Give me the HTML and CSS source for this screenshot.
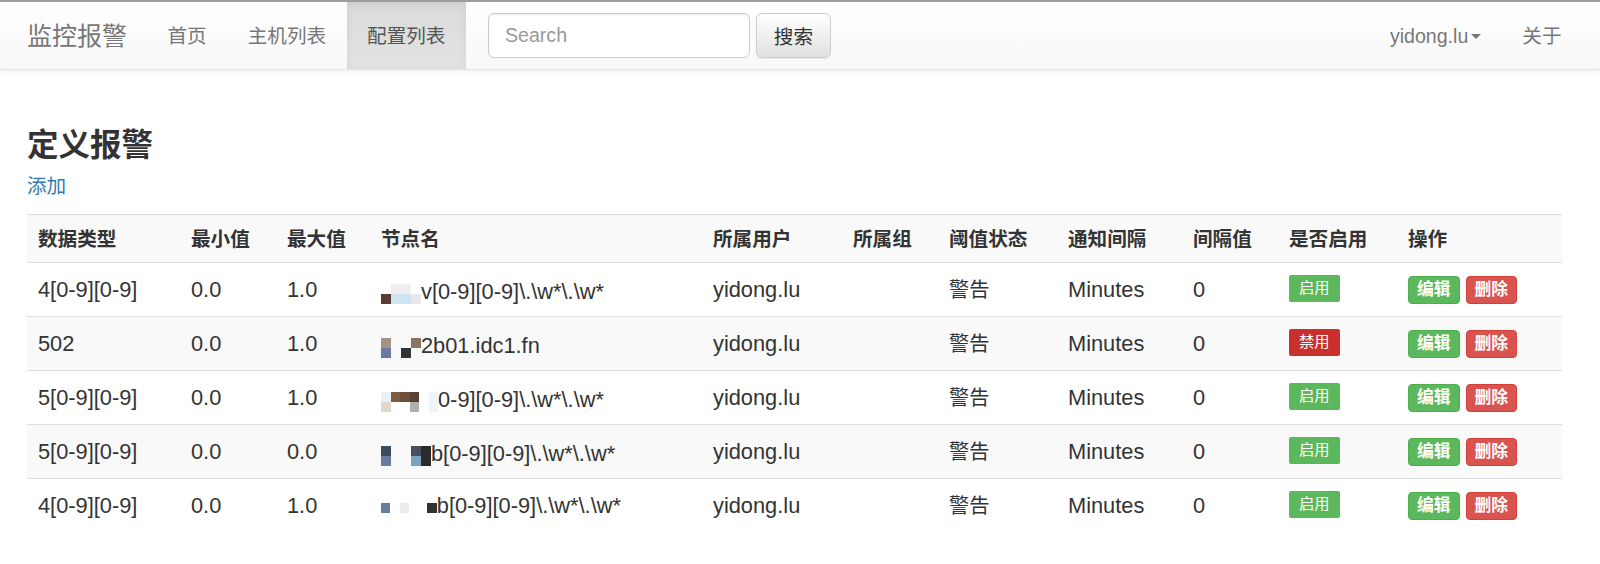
FILE: index.html
```html
<!DOCTYPE html>
<html lang="zh-CN">
<head>
<meta charset="utf-8">
<title>监控报警</title>
<link rel="stylesheet" href="styles.css">
</head>
<body>
<nav class="navbar">
  <div class="nav-inner">
    <a class="brand" href="#">监控报警</a>
    <ul class="nav">
      <li><a href="#">首页</a></li>
      <li><a href="#">主机列表</a></li>
      <li class="active"><a href="#">配置列表</a></li>
    </ul>
    <form class="search">
      <input class="search-input" type="text" placeholder="Search">
      <button class="search-btn" type="button">搜索</button>
    </form>
    <ul class="nav nav-right">
      <li><a href="#">yidong.lu<span class="caret"></span></a></li>
      <li><a href="#">关于</a></li>
    </ul>
  </div>
</nav>

<main class="container">
  <h3 class="title">定义报警</h3>
  <a class="add-link" href="#">添加</a>

  <table class="table">
    <colgroup>
      <col class="c1"><col class="c2"><col class="c3"><col class="c4"><col class="c5"><col class="c6"><col class="c7"><col class="c8"><col class="c9"><col class="c10"><col class="c11">
    </colgroup>
    <tbody>
      <tr class="head">
        <th>数据类型</th><th>最小值</th><th>最大值</th><th>节点名</th><th>所属用户</th><th>所属组</th><th>阈值状态</th><th>通知间隔</th><th>间隔值</th><th>是否启用</th><th>操作</th>
      </tr>
      <tr>
        <td>4[0-9][0-9]</td><td>0.0</td><td>1.0</td>
        <td><span class="node"><span class="mosaic m1"><i class="t"></i><i class="a"></i><i class="a"></i><i class="t"></i><i class="b"></i><i class="c"></i><i class="c"></i><i class="d"></i></span>v[0-9][0-9]\.\w*\.\w*</span></td>
        <td>yidong.lu</td><td></td><td><span class="zh">警告</span></td><td>Minutes</td><td>0</td>
        <td><span class="label on">启用</span></td>
        <td><span class="btn edit">编辑</span><span class="btn del">删除</span></td>
      </tr>
      <tr>
        <td>502</td><td>0.0</td><td>1.0</td>
        <td><span class="node"><span class="mosaic m2"><i class="a"></i><i class="t"></i><i class="t"></i><i class="e"></i><i class="b"></i><i class="t"></i><i class="d"></i><i class="t"></i></span>2b01.idc1.fn</span></td>
        <td>yidong.lu</td><td class="redact"></td><td><span class="zh">警告</span></td><td>Minutes</td><td>0</td>
        <td><span class="label off">禁用</span></td>
        <td><span class="btn edit">编辑</span><span class="btn del">删除</span></td>
      </tr>
      <tr>
        <td>5[0-9][0-9]</td><td>0.0</td><td>1.0</td>
        <td><span class="node"><span class="mosaic m3"><i class="e"></i><i class="a"></i><i class="b"></i><i class="c"></i><i class="t"></i><i class="f"></i><i class="d"></i><i class="t"></i><i class="t"></i><i class="g"></i><i class="t"></i><i class="f"></i></span>0-9][0-9]\.\w*\.\w*</span></td>
        <td>yidong.lu</td><td></td><td><span class="zh">警告</span></td><td>Minutes</td><td>0</td>
        <td><span class="label on">启用</span></td>
        <td><span class="btn edit">编辑</span><span class="btn del">删除</span></td>
      </tr>
      <tr>
        <td>5[0-9][0-9]</td><td>0.0</td><td>0.0</td>
        <td><span class="node"><span class="mosaic m4"><i class="a"></i><i class="t"></i><i class="t"></i><i class="h"></i><i class="d"></i><i class="b"></i><i class="t"></i><i class="t"></i><i class="e"></i><i class="d"></i></span>b[0-9][0-9]\.\w*\.\w*</span></td>
        <td>yidong.lu</td><td class="redact"></td><td><span class="zh">警告</span></td><td>Minutes</td><td>0</td>
        <td><span class="label on">启用</span></td>
        <td><span class="btn edit">编辑</span><span class="btn del">删除</span></td>
      </tr>
      <tr>
        <td>4[0-9][0-9]</td><td>0.0</td><td>1.0</td>
        <td><span class="node"><span class="mosaic m5"><i class="a"></i><i class="t"></i><i class="b"></i><i class="t"></i><i class="t"></i><i class="c"></i></span>b[0-9][0-9]\.\w*\.\w*</span></td>
        <td>yidong.lu</td><td></td><td><span class="zh">警告</span></td><td>Minutes</td><td>0</td>
        <td><span class="label on">启用</span></td>
        <td><span class="btn edit">编辑</span><span class="btn del">删除</span></td>
      </tr>
    </tbody>
  </table>
</main>
</body>
</html>
```
FILE: styles.css
```css
* { box-sizing: border-box; }

html, body {
  margin: 0;
  padding: 0;
  background: #fff;
}

body {
  font-family: "Liberation Sans", "Noto Sans CJK SC", sans-serif;
  font-size: 19.6px;
  line-height: 28px;
  color: #333;
}

a { text-decoration: none; }

/* ---------- navbar ---------- */
.navbar {
  height: 70px;
  border-top: 2px solid #9c9c9c;
  border-bottom: 1px solid #e3e3e3;
  background: linear-gradient(to bottom, #ffffff 0%, #f8f8f8 100%);
  box-shadow: 0 1px 7px rgba(0, 0, 0, 0.075);
}

.nav-inner {
  display: flex;
  align-items: stretch;
  height: 67px;
  padding: 0 18px 0 27px;
}

.brand {
  display: flex;
  align-items: center;
  font-size: 25px;
  color: #777;
  padding: 0 20px 0 0;
}

.nav {
  display: flex;
  list-style: none;
  margin: 0;
  padding: 0;
}

.nav li { display: flex; }

.nav a {
  display: flex;
  align-items: center;
  padding: 0 20.5px;
  color: #777;
}

.nav .active a {
  color: #555;
  background: linear-gradient(to bottom, #dbdbdb 0%, #e2e2e2 100%);
  box-shadow: inset 0 3px 9px rgba(0, 0, 0, 0.06);
}

.search {
  display: flex;
  align-items: center;
  gap: 6px;
  margin-left: 22px;
  padding-bottom: 1px;
}

.search-input {
  width: 262px;
  height: 45px;
  border: 1px solid #ccc;
  border-radius: 6px;
  padding: 0 16px;
  font-family: "Liberation Sans", "Noto Sans CJK SC", sans-serif;
  font-size: 19.6px;
  color: #555;
  box-shadow: inset 0 1px 1px rgba(0, 0, 0, 0.075);
  margin-top: 1px;
}

.search-input::placeholder { color: #999; }

.search-btn {
  width: 75px;
  height: 45px;
  border: 1px solid #ccc;
  border-radius: 6px;
  background: linear-gradient(to bottom, #ffffff 0%, #e0e0e0 100%);
  box-shadow: inset 0 1px 0 rgba(255, 255, 255, 0.15), 0 1px 1px rgba(0, 0, 0, 0.075);
  font-family: "Liberation Sans", "Noto Sans CJK SC", sans-serif;
  font-size: 19.6px;
  color: #333;
  padding: 0;
}

.nav-right {
  margin-left: auto;
}

.caret {
  display: inline-block;
  width: 0;
  height: 0;
  margin-left: 3px;
  margin-top: 2px;
  border-top: 5.6px solid #777;
  border-left: 5.6px solid transparent;
  border-right: 5.6px solid transparent;
}

/* ---------- content ---------- */
.container {
  padding: 0 38px 40px 27px;
}

.title {
  margin: 57px 0 0 0;
  font-size: 31.5px;
  line-height: 36px;
  font-weight: 700;
  color: #333;
}

.add-link {
  display: block;
  margin-top: 9px;
  color: #337ab7;
  width: max-content;
}

.table {
  margin-top: 14px;
  width: 1535px;
  border-collapse: collapse;
  table-layout: fixed;
}

.c1 { width: 153px; }
.c2 { width: 96px; }
.c3 { width: 94px; }
.c4 { width: 332px; }
.c5 { width: 140px; }
.c6 { width: 96px; }
.c7 { width: 119px; }
.c8 { width: 125px; }
.c9 { width: 96px; }
.c10 { width: 119px; }
.c11 { width: 165px; }

.table th,
.table td {
  border-top: 1px solid #dddddd;
  padding: 0 11px;
  text-align: left;
  vertical-align: middle;
  white-space: nowrap;
}

.table th {
  height: 48px;
  font-weight: bold;
}

.table td {
  height: 54px;
  font-size: 21.8px;
}

.table td .zh {
  font-size: 20.2px;
}

.table tbody tr:nth-of-type(odd) {
  background: #f9f9f9;
}

.table tbody tr:nth-of-type(even) .redact {
  background: #fff;
}

.node {
  display: inline-flex;
  align-items: center;
}

.mosaic {
  display: inline-grid;
  grid-template-columns: repeat(5, 10px);
  grid-auto-rows: 10px;
  margin-top: 4px;
}

.mosaic i { display: block; }
.mosaic .t { background: transparent; }

.m1 { grid-template-columns: repeat(4, 10px); }
.m1 .a { background: #f0eeee; }
.m1 .b { background: #5b3b33; }
.m1 .c { background: #cfe4f3; }
.m1 .d { background: #e8e8e8; }

.m2 { grid-template-columns: repeat(4, 10px); }
.m2 .a { background: #a39385; }
.m2 .b { background: #6b7aa1; }
.m2 .d { background: #333; }
.m2 .e { background: #8a7565; }

.m3 { grid-template-columns: repeat(6, 9.5px); }
.m3 .a { background: #7e5d3e; }
.m3 .b { background: #6c4f35; }
.m3 .c { background: #5a4030; }
.m3 .d { background: #e0d6cc; }
.m3 .e { background: #e9f1f6; }
.m3 .f { background: #eef4f8; }
.m3 .g { background: #b0b0b0; }

.m4 { grid-template-columns: repeat(5, 10px); }
.m4 .a { background: #3d4c5c; }
.m4 .b { background: #6b7aa1; }
.m4 .h { background: #4a4f5e; }
.m4 .d { background: #2a2a2a; }
.m4 .e { background: #79a3c4; }

.m5 { grid-template-columns: repeat(6, 9.3px); }
.m5 .a { background: #6b7aa1; }
.m5 .b { background: #ececec; }
.m5 .c { background: #333; }

.label {
  display: inline-block;
  font-size: 15.3px;
  line-height: 20px;
  padding: 3px 10px 4px;
  color: #fff;
  border-radius: 2px;
  vertical-align: middle;
  margin-top: -4px;
}

.label.on { background: #5cb85c; }
.label.off { background: #c9302c; }

.btn {
  display: inline-block;
  font-size: 16.8px;
  line-height: 26px;
  padding: 0 8px;
  border: 1px solid transparent;
  border-radius: 4px;
  color: #fff;
  font-weight: bold;
  vertical-align: middle;
}

.btn + .btn { margin-left: 6px; }

.btn.edit { background: #5cb85c; border-color: #4cae4c; }
.btn.del { background: #d9534f; border-color: #d43f3a; }
```
